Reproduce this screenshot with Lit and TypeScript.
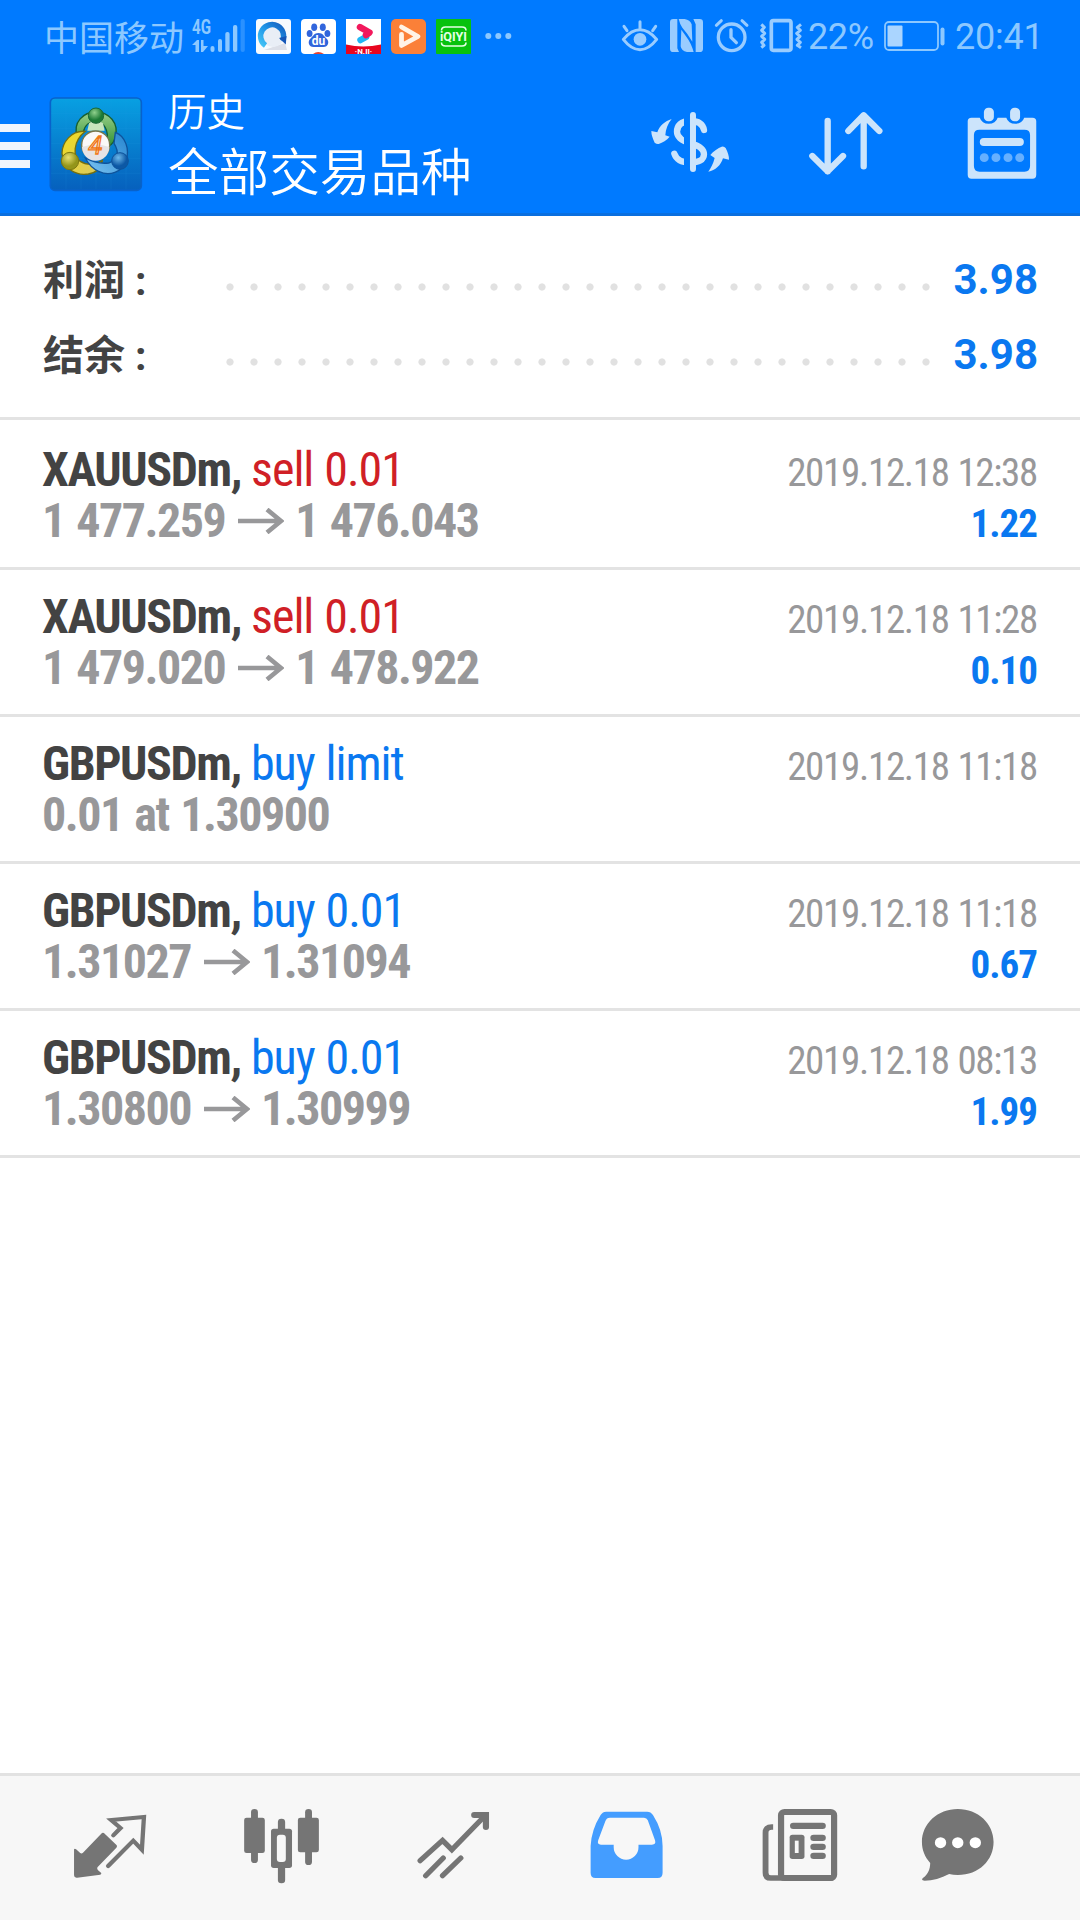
import { LitElement, html, css, svg } from "lit";
import { customElement, property } from "lit/decorators.js";

interface Deal {
  symbol: string;
  action: string;
  side: "buy" | "sell";
  from: string;
  to?: string;
  time: string;
  profit?: string;
}

const DEALS: Deal[] = [
  { symbol: "XAUUSDm,", action: "sell 0.01", side: "sell", from: "1 477.259", to: "1 476.043", time: "2019.12.18 12:38", profit: "1.22" },
  { symbol: "XAUUSDm,", action: "sell 0.01", side: "sell", from: "1 479.020", to: "1 478.922", time: "2019.12.18 11:28", profit: "0.10" },
  { symbol: "GBPUSDm,", action: "buy limit", side: "buy", from: "0.01 at 1.30900", time: "2019.12.18 11:18" },
  { symbol: "GBPUSDm,", action: "buy 0.01", side: "buy", from: "1.31027", to: "1.31094", time: "2019.12.18 11:18", profit: "0.67" },
  { symbol: "GBPUSDm,", action: "buy 0.01", side: "buy", from: "1.30800", to: "1.30999", time: "2019.12.18 08:13", profit: "1.99" },
];

@customElement("status-bar")
class StatusBar extends LitElement {
  static styles = css`
    :host {
      display: flex;
      align-items: center;
      height: 72px;
      padding: 0 38px 0 44px;
      box-sizing: border-box;
      color: #8cc8ff;
      font-family: Roboto, "Noto Sans CJK SC", sans-serif;
    }
    svg { display: block; flex: none; overflow: visible; }
    .carrier { font: 400 35px/71px "Noto Sans CJK SC", sans-serif; height: 72px; width: 148px; white-space: nowrap; }
    .apps { display: flex; gap: 10px; margin-left: 11px; }
    .more { margin-left: 14px; }
    .right { display: flex; align-items: center; margin-left: auto; }
    .num { font-size: 36px; line-height: 74px; height: 72px; font-weight: 400; white-space: nowrap; box-sizing: border-box; }
    .pct { width: 69px; padding-left: 2px; letter-spacing: -0.400px; }
    .clock { width: 88px; padding-left: 1px; letter-spacing: -0.200px; }
    .icons { width: 184px; height: 36px; }
    .battery { margin: 0 9px 0 9px; }
  `;

  render() {
    return html`
      <span class="carrier">中国移动</span>
      <svg width="53" height="36" viewBox="0 0 53 36" fill="#8cc8ff">
        <text x="0" y="16" font-family="Roboto" font-weight="700" font-size="20" textLength="19" lengthAdjust="spacingAndGlyphs">4G</text>
        <path d="M0 27l5-5h2v12H3.500V27zM9 22h2.500v6h4.500l-5 6H9z" />
        <rect x="18.500" y="28" width="4" height="6" rx="2" />
        <rect x="26" y="21" width="4" height="13" rx="2" />
        <rect x="33.300" y="14" width="4.300" height="20" rx="2" />
        <rect x="41" y="7" width="4.300" height="27" rx="2" />
        <rect x="48.600" y="1" width="4.200" height="33" rx="2" opacity=".3" />
      </svg>
      <div class="apps">
        <svg width="35" height="35" viewBox="0 0 35 35">
          <defs>
            <linearGradient id="qb" x1="0" y1="1" x2="1" y2="0"><stop offset="0" stop-color="#45c4f5" /><stop offset=".5" stop-color="#1f96e8" /><stop offset="1" stop-color="#1560c0" /></linearGradient>
          </defs>
          <rect width="35" height="35" rx="3" fill="#f7fafd" />
          <path d="M8 31L31 31L29 24Z" fill="#dcdfe8" />
          <circle cx="17" cy="17.500" r="10.600" fill="#e9eef6" />
          <path d="M26.500 22A11.500 11.500 0 1 0 9.500 26.500" fill="none" stroke="url(#qb)" stroke-width="5.500" />
          <path d="M30.500 17L29.800 25.500L23 19Z" fill="#1657b8" />
        </svg>
        <svg width="35" height="35" viewBox="0 0 35 35">
          <rect width="35" height="35" rx="4" fill="#fff" />
          <g fill="#3165dc">
            <ellipse cx="13.200" cy="8.200" rx="3" ry="3.800" /><ellipse cx="21.800" cy="8.200" rx="3" ry="3.800" />
            <ellipse cx="8.600" cy="14.500" rx="2.900" ry="3.500" /><ellipse cx="26.400" cy="14.500" rx="2.900" ry="3.500" />
            <path d="M17.500 14c4.500 0 5 3 8 5.500 3.500 3.500 1.500 8.500-3 8.500h-10c-4.500 0-6.500-5-3-8.500 3-2.500 3.500-5.500 8-5.500z" />
          </g>
          <text x="17.500" y="26" text-anchor="middle" font-family="Roboto" font-weight="700" font-size="12" fill="#fff">du</text>
          <path d="M12 35q5-4 11 0z" fill="#e6412e" />
        </svg>
        <svg width="35" height="35" viewBox="0 0 35 35">
          <rect width="35" height="35" fill="#fff" />
          <path d="M14.500 21L20 18" stroke="#1fb7f5" stroke-width="6.500" stroke-linecap="round" />
          <path d="M14 8.200L23.500 13.500L20 16" fill="none" stroke="#f2185c" stroke-width="6.500" stroke-linecap="round" stroke-linejoin="round" />
          <path d="M0 25.500q17 4 35 0v9.500H0z" fill="#e8051f" />
          <text x="17.500" y="34.500" text-anchor="middle" font-family="Roboto" font-weight="700" font-size="8" fill="#fff">·N.II·</text>
        </svg>
        <svg width="35" height="35" viewBox="0 0 35 35">
          <rect width="35" height="35" rx="5" fill="#fb8038" />
          <path d="M10.500 15.500V26.500L27 17.500L10.500 8" fill="none" stroke="#fff3e6" stroke-width="4.800" stroke-linecap="round" stroke-linejoin="round" />
        </svg>
        <svg width="35" height="35" viewBox="0 0 35 35">
          <rect width="35" height="35" rx="1" fill="#08c20d" />
          <path d="M5.500 11.500Q5.500 8 9.500 8H26Q30 8 30 11.500M5.500 23.500Q5.500 27 9.500 27H26Q30 27 30 23.500" fill="none" stroke="#e4ffe4" stroke-width="1.600" />
          <text x="4" y="22.300" font-family="Roboto" font-weight="700" font-size="13.500" textLength="27" lengthAdjust="spacingAndGlyphs" fill="#e4ffe4">iQIYI</text>
        </svg>
      </div>
      <svg class="more" width="27" height="8" viewBox="0 0 27 8" fill="#8cc8ff">
        <circle cx="3.300" cy="4" r="3" /><circle cx="13.300" cy="4" r="3" /><circle cx="23.300" cy="4" r="3" />
      </svg>
      <div class="right">
        <svg class="icons" viewBox="36 27 552 108" fill="none" stroke="#99ccff" stroke-linecap="round">
          <path d="M40 91Q64 62 90 62T140 91Q116 122 90 122T40 91Z" stroke-width="9" stroke-linejoin="round" />
          <circle cx="90" cy="91" r="19" fill="#99ccff" stroke="none" />
          <path d="M90 38V58M42 52L51 65M137 52L128 65" stroke-width="9" />
          <g stroke="none" fill="#99ccff">
            <path d="M190 30H202V118L207 129H190Q180 129 180 119V40Q180 30 190 30Z" />
            <path d="M206 30H224Q240 33 245 46L247 98L232 75L217 56Q210 47 206 30Z" />
            <path d="M214 62L230 85Q243 102 251 129H231Q214 126 212 112Z" />
            <path d="M250 30H269Q279 30 279 40V119Q279 129 269 129H257V46Z" />
          </g>
          <circle cx="365" cy="85" r="40" stroke-width="10" />
          <path d="M319 49L334 35M411 49L396 35" stroke-width="9" />
          <path d="M363 62V85L379 101" stroke-width="10" />
          <rect x="484" y="35" width="59" height="89" rx="6" stroke-width="11" />
          <path d="M454 46L463 55L455 64L464 73L455 82L464 91L455 100L462 109L454 116M573 46L562 55L571 64L560 73L570 82L561 91L571 100L562 109L573 116" stroke-width="9" stroke-linecap="butt" stroke-linejoin="round" />
        </svg>
        <span class="num pct">22%</span>
        <svg class="battery" width="61" height="30" viewBox="0 0 61 30">
          <rect x="1" y="1" width="53" height="28" rx="4" fill="none" stroke="#8cc8ff" stroke-width="1.800" />
          <rect x="3.500" y="4.500" width="15" height="21" rx="1" fill="#aad5ff" />
          <rect x="56.500" y="6.500" width="4" height="18" rx="2" fill="#8cc8ff" />
        </svg>
        <span class="num clock">20:41</span>
      </div>
    `;
  }
}

@customElement("app-header")
class AppHeader extends LitElement {
  static styles = css`
    :host {
      display: flex;
      height: 144px;
      box-sizing: border-box;
      border-bottom: 3px solid #0a6fdf;
      color: #fff;
      font-family: "Noto Sans CJK SC", sans-serif;
    }
    svg { display: block; flex: none; }
    .menu { margin-top: 52px; }
    .logo { margin: 24px 0 0 18px; }
    .titles { margin: 5px 0 0 24px; font-weight: 350; white-space: nowrap; }
    .sub { font-size: 38.500px; line-height: 64px; }
    .main { font-size: 50.600px; line-height: 62px; margin-top: -3px; }
    .actions { display: flex; margin-left: auto; }
  `;

  render() {
    return html`
      <svg class="menu" width="30" height="44" viewBox="0 0 30 44" fill="#f0f5fd">
        <rect width="30" height="8" /><rect y="18" width="30" height="8" /><rect y="36" width="30" height="8" />
      </svg>
      <svg class="logo" width="96" height="96" viewBox="24 18 288 288">
        <defs>
          <linearGradient id="bg" x1="0" y1="0" x2="0" y2="1"><stop offset="0" stop-color="#08a0e2" /><stop offset="1" stop-color="#0660bd" /></linearGradient>
          <linearGradient id="gr" x1="0" y1="0" x2="0" y2="1"><stop offset="0" stop-color="#9bd08a" /><stop offset="1" stop-color="#2d8f31" /></linearGradient>
          <linearGradient id="ye" x1="0" y1="0" x2="1" y2="1"><stop offset="0" stop-color="#f0dc20" /><stop offset="1" stop-color="#d9c862" /></linearGradient>
          <linearGradient id="bl" x1="1" y1="0" x2="0" y2="1"><stop offset="0" stop-color="#2484cf" /><stop offset="1" stop-color="#7cc4f2" /></linearGradient>
          <radialGradient id="gh" cx=".4" cy=".3"><stop offset="0" stop-color="#8fd08c" /><stop offset="1" stop-color="#1c7a35" /></radialGradient>
          <radialGradient id="yh" cx=".4" cy=".3"><stop offset="0" stop-color="#e8e070" /><stop offset="1" stop-color="#94951a" /></radialGradient>
          <radialGradient id="bh" cx=".4" cy=".3"><stop offset="0" stop-color="#6db8ea" /><stop offset="1" stop-color="#0c58a5" /></radialGradient>
        </defs>
        <rect x="31" y="24" width="273" height="277" rx="14" fill="url(#bg)" stroke="#0862cb" stroke-width="5" />
        <path d="M78 27V298M123 27V298M168 27V298M213 27V298M258 27V298M33 70H302M33 115H302M33 160H302M33 205H302M33 250H302" stroke="#2ba5ec" stroke-width="1" opacity=".35" />
        <path d="M112 143C96 95 132 66 168 66C205 66 240 98 225 145C220 160 210 170 194 172L202 142C203 108 183 94 167 94C150 94 134 104 130 127Z" fill="url(#gr)" stroke="#175f31" stroke-width="4" />
        <path d="M136 124C94 120 66 158 66 190C70 235 105 258 145 252C168 248 184 234 187 212C170 224 140 227 121 214C98 202 98 154 136 124Z" fill="url(#ye)" stroke="#756f10" stroke-width="4" />
        <path d="M226 127C256 138 270 178 258 212C246 247 208 260 176 244C158 236 143 218 136 204C156 215 178 222 206 219C232 211 240 188 222 160Z" fill="url(#bl)" stroke="#0e539b" stroke-width="4" />
        <path d="M147 100Q168 82 189 100L194 122H142Z" fill="#c7e6bc" />
        <circle cx="168" cy="77" r="23" fill="url(#gh)" stroke="#1b6836" stroke-width="3" />
        <circle cx="90" cy="213" r="26" fill="url(#yh)" stroke="#7d7810" stroke-width="3" />
        <circle cx="240" cy="213" r="25" fill="url(#bh)" stroke="#0e539b" stroke-width="3" />
        <circle cx="167" cy="165" r="42" fill="#faf8f8" stroke="#75754a" stroke-width="4" />
        <path d="M126 171Q167 158 208 171A41 41 0 0 1 126 171Z" fill="#e6e3e5" />
        <text x="166" y="191" text-anchor="middle" font-family="Roboto" font-style="italic" font-size="76" fill="#fff0d8" stroke="#f07818" stroke-width="4">4</text>
      </svg>
      <div class="titles">
        <div class="sub">历史</div>
        <div class="main">全部交易品种</div>
      </div>
      <div class="actions">
        <svg width="127.300" height="140" viewBox="0 -84 382 420">
          <path d="M192 90C188 70 172 63 152 63C122 63 111 78 111 95C111 115 132 124 152 130C180 138 192 148 192 163C192 180 175 188 152 188C125 188 108 177 103 161" fill="none" stroke="#cce4fb" stroke-width="19" stroke-linecap="round" />
          <rect x="132" y="40" width="18" height="170" fill="#007aff" />
          <path d="M159 45V207" stroke="#cce4fb" stroke-width="18" stroke-linecap="round" />
          <g fill="#cce4fb">
            <path d="M95 57C75 63 58 78 52 97L34 93Q34 108 44 128Q50 133 56 132C68 126 80 122 89 110L76 106C77 88 84 70 95 57Z" />
            <path d="M205 215C213 205 220 190 224 174L211 165C220 153 235 144 245 140Q252 138 257 144Q268 165 267 179L249 175C243 195 226 212 205 215Z" />
          </g>
        </svg>
        <svg width="157.700" height="140" viewBox="382 -84 473 420" fill="none" stroke="#cce4fb" stroke-width="19" stroke-linecap="round" stroke-linejoin="round">
          <path d="M564 63V214M518 168L564 214L610 168M672 199V46M626 93L672 46L719 93" />
        </svg>
        <svg width="155" height="140" viewBox="1118 216 450 420" preserveAspectRatio="none">
          <path fill-rule="evenodd" d="M1253 353H1277Q1283 371 1303 371T1329 353H1354Q1360 371 1380 371T1406 353H1430Q1441 353 1441 364V524Q1441 536 1430 536H1253Q1242 536 1242 524V364Q1242 353 1253 353ZM1276 389Q1260 389 1260 405V498Q1260 515 1276 515H1407Q1423 515 1423 498V405Q1423 389 1407 389Z" fill="#cce4fb" />
          <rect x="1289" y="323" width="29" height="41" rx="13" fill="#cce4fb" />
          <rect x="1365" y="323" width="29" height="41" rx="13" fill="#cce4fb" />
          <rect x="1277" y="414" width="128" height="24" rx="12" fill="#cce4fb" />
          <g fill="#66b0ff"><circle cx="1290" cy="473" r="13" /><circle cx="1324" cy="473" r="13" /><circle cx="1359" cy="473" r="13" /><circle cx="1393" cy="473" r="13" /></g>
        </svg>
      </div>
    `;
  }
}

@customElement("summary-row")
class SummaryRow extends LitElement {
  @property() label = "";
  @property() value = "";

  static styles = css`
    :host { display: flex; align-items: center; height: 75px; }
    .label { width: 184px; height: 75px; padding-left: 1px; box-sizing: border-box; font: 700 41px/78px Roboto, "Noto Sans CJK SC", sans-serif; color: #434343; white-space: nowrap; }
    .colon { margin-left: 10px; }
    .dots { flex: none; width: 720px; height: 8px; margin-top: 14px; background: radial-gradient(circle at 4px 4px, #e1e1e1 3.200px, transparent 4px) 0 0 / 24px 8px repeat-x; }
    .value { margin-left: auto; font: 700 42px/75px Roboto, sans-serif; color: #0a78f0; }
  `;

  render() {
    return html`
      <span class="label">${this.label}<span class="colon">:</span></span>
      <span class="dots"></span>
      <span class="value">${this.value}</span>
    `;
  }
}

@customElement("deal-row")
class DealRow extends LitElement {
  @property({ attribute: false }) deal!: Deal;

  static styles = css`
    :host {
      display: flex;
      justify-content: space-between;
      height: 147px;
      box-sizing: border-box;
      padding: 21px 42px 0;
      border-bottom: 3px solid #e3e3e3;
      font-family: "Roboto Condensed", Roboto, sans-serif;
      font-stretch: 75%;
      white-space: nowrap;
    }
    .line { display: flex; align-items: baseline; height: 51px; line-height: 51px; font-size: 48px; }
    .details { padding-top: 4px; }
    .end { justify-content: flex-end; font-size: 39px; }
    .symbol { font-weight: 700; color: #434343; letter-spacing: -1.400px; margin-right: 10px; }
    .action { letter-spacing: -1.050px; word-spacing: 1px; }
    .sell { color: #d01f26; }
    .buy { color: #0a78f0; }
    .price { font-weight: 700; color: #98989a; letter-spacing: -1.500px; word-spacing: 2px; }
    .time { color: #98989a; letter-spacing: -1.300px; word-spacing: 1px; margin-right: 1px; }
    .profit { font-weight: 700; color: #0a78f0; letter-spacing: -1px; margin-right: 1px; }
    .arrow { width: 46px; height: 26px; margin: 0 11px 0 13px; align-self: center; }
  `;

  render() {
    const d = this.deal;
    return html`
      <div>
        <div class="line"><span class="symbol">${d.symbol}</span><span class="action ${d.side}">${d.action}</span></div>
        <div class="line price">
          <span>${d.from}</span>
          ${d.to
            ? html`<svg class="arrow" viewBox="0 0 46 26" fill="none" stroke="#98989a" stroke-width="4.600"><path d="M0 13H43M29 1.500L43 13L29 24.500" /></svg><span>${d.to}</span>`
            : ""}
        </div>
      </div>
      <div class="details">
        <div class="line end time">${d.time}</div>
        <div class="line end profit">${d.profit ?? ""}</div>
      </div>
    `;
  }
}

const TABS = [
  { x: 0, art: svg`<path d="M299 218Q302 218 304 221L339 256Q341 260 338 263L283 322Q281 326 284 330L294 339Q295 343 291 344L224 353Q215 354 215 346V268Q217 265 221 268L233 279Q237 282 241 278L294 221Q296 218 299 218Z" fill="#757575"/><path d="M329 226L350 204L323 180L418 171L412 269L387 242L314 318" fill="none" stroke="#757575" stroke-width="12.500" stroke-linecap="round"/>` },
  { x: 522.7, art: svg`<g fill="#757575"><rect x="729" y="147" width="20" height="162" rx="10"/><rect x="709" y="173" width="60" height="106" rx="7"/><rect x="886" y="147" width="20" height="168" rx="10"/><rect x="865" y="173" width="61" height="104" rx="7"/><rect x="807" y="176" width="21" height="194" rx="10"/><rect x="787" y="206" width="61" height="118" rx="8"/></g><rect x="804" y="224" width="26" height="82" rx="9" fill="#f7f7f7"/>` },
  { x: 1045.3, art: svg`<path d="M1220 302L1285 241L1312 269L1411 164M1236 347L1287 294M1285 347L1338 294" fill="none" stroke="#757575" stroke-width="15.500" stroke-linecap="round"/><path d="M1377 165H1411V201" fill="none" stroke="#757575" stroke-width="18" stroke-linecap="round"/>` },
  { x: 0, art: svg`<path d="M192 155H311Q322 155 328 165Q356 210 356 258V338Q356 354 342 354H161Q147 354 147 338V258Q149 210 176 165Q182 155 192 155Z" fill="#449dff"/><path d="M203 173H302Q310 173 313 181L334 241Q338 254 325 254H286V262A36 37 0 0 1 214 262V254H177Q165 254 169 241L190 183Q193 173 203 173Z" fill="#f7f7f7"/>` },
  { x: 522.7, art: svg`<path d="M677 201H673Q655 201 655 218V338Q655 354 670 354H850" fill="none" stroke="#757575" stroke-width="17"/><rect x="700" y="156" width="154" height="198" rx="10" fill="#f7f7f7" stroke="#757575" stroke-width="18"/><g fill="#757575"><rect x="726" y="188" width="104" height="19" rx="9.500"/><rect x="725" y="224" width="43" height="73" rx="8"/><rect x="785" y="224" width="45" height="19" rx="9.500"/><rect x="785" y="251" width="45" height="19" rx="9.500"/><rect x="785" y="278" width="45" height="19" rx="9.500"/></g><rect x="740" y="242" width="11" height="37" fill="#f7f7f7"/>` },
  { x: 1045.3, art: svg`<path d="M1213 147C1272 147 1317 191 1317 246C1317 300 1275 345 1213 345C1204 345 1196 344 1188 342C1165 355 1140 362 1117 362C1108 362 1107 357 1115 352C1126 342 1133 328 1133 309C1117 290 1109 270 1109 246C1109 191 1155 147 1213 147Z" fill="#757575"/><g fill="#fff"><circle cx="1163" cy="248" r="16.500"/><circle cx="1213" cy="248" r="16.500"/><circle cx="1264" cy="248" r="16.500"/></g>` },
];

@customElement("tab-bar")
class TabBar extends LitElement {
  static styles = css`
    :host { display: grid; grid-template-columns: repeat(6, 1fr); height: 147px; box-sizing: border-box; border-top: 3px solid #e2e2e2; background: #f7f7f7; }
    svg { display: block; width: 100%; height: 144px; }
  `;

  render() {
    return TABS.map((t) => html`<svg viewBox="${t.x} 48 522.7 432" preserveAspectRatio="none">${t.art}</svg>`);
  }
}

@customElement("app-root")
class AppRoot extends LitElement {
  static styles = css`
    :host { display: flex; flex-direction: column; width: 1080px; height: 1920px; background: #fff; overflow: hidden; }
    .top { background: #007aff; height: 216px; flex: none; }
    .summary { height: 204px; box-sizing: border-box; padding: 26px 42px 0; border-bottom: 3px solid #e3e3e3; flex: none; }
    .deals { flex: 1; padding-top: 3px; }
  `;

  render() {
    return html`
      <div class="top"><status-bar></status-bar><app-header></app-header></div>
      <div class="summary">
        <summary-row label="利润" value="3.98"></summary-row>
        <summary-row label="结余" value="3.98"></summary-row>
      </div>
      <div class="deals">${DEALS.map((d) => html`<deal-row .deal=${d}></deal-row>`)}</div>
      <tab-bar></tab-bar>
    `;
  }
}
